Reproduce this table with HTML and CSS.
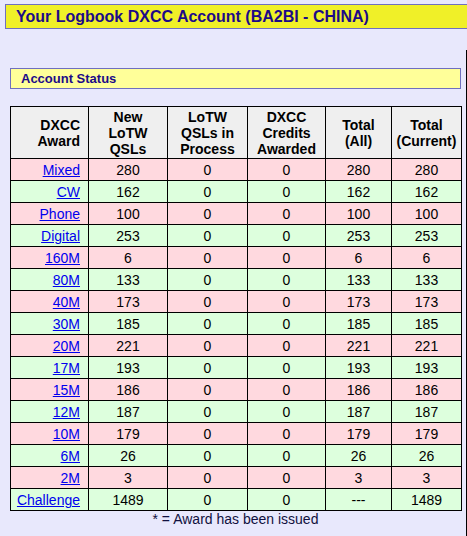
FILE: index.html
```html
<!DOCTYPE html>
<html>
<head>
<meta charset="utf-8">
<link rel="stylesheet" href="styles.css">
</head>
<body>
<div class="title">Your Logbook DXCC Account (BA2BI - CHINA)</div>
<div class="content">
  <div class="section">Account Status</div>
  <table class="status">
    <colgroup>
      <col class="c1"><col class="c2"><col class="c3"><col class="c4"><col class="c5"><col class="c6">
    </colgroup>
    <thead>
      <tr>
        <th class="award-h">DXCC<br>Award</th>
        <th>New<br>LoTW<br>QSLs</th>
        <th>LoTW<br>QSLs in<br>Process</th>
        <th>DXCC<br>Credits<br>Awarded</th>
        <th>Total<br>(All)</th>
        <th>Total<br>(Current)</th>
      </tr>
    </thead>
    <tbody>
      <tr class="pink"><td class="award"><a href="#">Mixed</a></td><td>280</td><td>0</td><td>0</td><td>280</td><td>280</td></tr>
      <tr class="green"><td class="award"><a href="#">CW</a></td><td>162</td><td>0</td><td>0</td><td>162</td><td>162</td></tr>
      <tr class="pink"><td class="award"><a href="#">Phone</a></td><td>100</td><td>0</td><td>0</td><td>100</td><td>100</td></tr>
      <tr class="green"><td class="award"><a href="#">Digital</a></td><td>253</td><td>0</td><td>0</td><td>253</td><td>253</td></tr>
      <tr class="pink"><td class="award"><a href="#">160M</a></td><td>6</td><td>0</td><td>0</td><td>6</td><td>6</td></tr>
      <tr class="green"><td class="award"><a href="#">80M</a></td><td>133</td><td>0</td><td>0</td><td>133</td><td>133</td></tr>
      <tr class="pink"><td class="award"><a href="#">40M</a></td><td>173</td><td>0</td><td>0</td><td>173</td><td>173</td></tr>
      <tr class="green"><td class="award"><a href="#">30M</a></td><td>185</td><td>0</td><td>0</td><td>185</td><td>185</td></tr>
      <tr class="pink"><td class="award"><a href="#">20M</a></td><td>221</td><td>0</td><td>0</td><td>221</td><td>221</td></tr>
      <tr class="green"><td class="award"><a href="#">17M</a></td><td>193</td><td>0</td><td>0</td><td>193</td><td>193</td></tr>
      <tr class="pink"><td class="award"><a href="#">15M</a></td><td>186</td><td>0</td><td>0</td><td>186</td><td>186</td></tr>
      <tr class="green"><td class="award"><a href="#">12M</a></td><td>187</td><td>0</td><td>0</td><td>187</td><td>187</td></tr>
      <tr class="pink"><td class="award"><a href="#">10M</a></td><td>179</td><td>0</td><td>0</td><td>179</td><td>179</td></tr>
      <tr class="green"><td class="award"><a href="#">6M</a></td><td>26</td><td>0</td><td>0</td><td>26</td><td>26</td></tr>
      <tr class="pink"><td class="award"><a href="#">2M</a></td><td>3</td><td>0</td><td>0</td><td>3</td><td>3</td></tr>
      <tr class="green"><td class="award"><a href="#">Challenge</a></td><td>1489</td><td>0</td><td>0</td><td>---</td><td>1489</td></tr>
    </tbody>
  </table>
  <div class="note">* = Award has been issued</div>
</div>
</body>
</html>
```

FILE: styles.css
```css
html, body {
  margin: 0;
  padding: 0;
  background: #e8e8fc;
  overflow: hidden;
}
body {
  padding: 4px 0 0 5px;
  font-family: "Liberation Sans", Arial, sans-serif;
  width: 462px;
}
.title {
  background: #f0f028;
  border: 1px solid #6f6fbf;
  border-right: none;
  color: #1c0a88;
  font-weight: bold;
  font-size: 16px;
  line-height: 23px;
  height: 23px;
  padding-left: 10px;
  margin-right: -10px;
}
.content {
  margin-top: 21px;
  border-right: 1px solid #000;
  padding: 18px 5px 26px 5px;
}
.section {
  background: #ffff99;
  border: 1px solid #6f6fbf;
  color: #1c0a88;
  font-weight: bold;
  font-size: 13px;
  line-height: 19px;
  height: 19px;
  padding-left: 10px;
}
.status {
  margin-top: 17px;
  width: 451px;
  border-collapse: collapse;
  table-layout: fixed;
  font-size: 14px;
  color: #000;
}
.c1 { width: 78px; }
.c2 { width: 79px; }
.c3 { width: 80px; }
.c4 { width: 78px; }
.c5 { width: 66px; }
.c6 { width: 70px; }
.status th, .status td {
  border: 1px solid #000;
  text-align: center;
}
.status th {
  background: #efefef;
  font-weight: bold;
  line-height: 16px;
  padding: 2px 2px 1px;
  height: 47px;
  vertical-align: middle;
}
.status th.award-h {
  text-align: right;
  padding-right: 8px;
}
.status td {
  line-height: 16px;
  height: 16px;
  padding: 3px 2px 2px;
}
.status td.award {
  text-align: right;
  padding-right: 8px;
}
.status a {
  color: #0000ee;
  text-decoration: underline;
}
.pink td { background: #ffd9df; }
.green td { background: #ddffdd; }
.note {
  width: 451px;
  text-align: center;
  font-size: 14px;
  line-height: 16px;
  color: #101040;
}
```
